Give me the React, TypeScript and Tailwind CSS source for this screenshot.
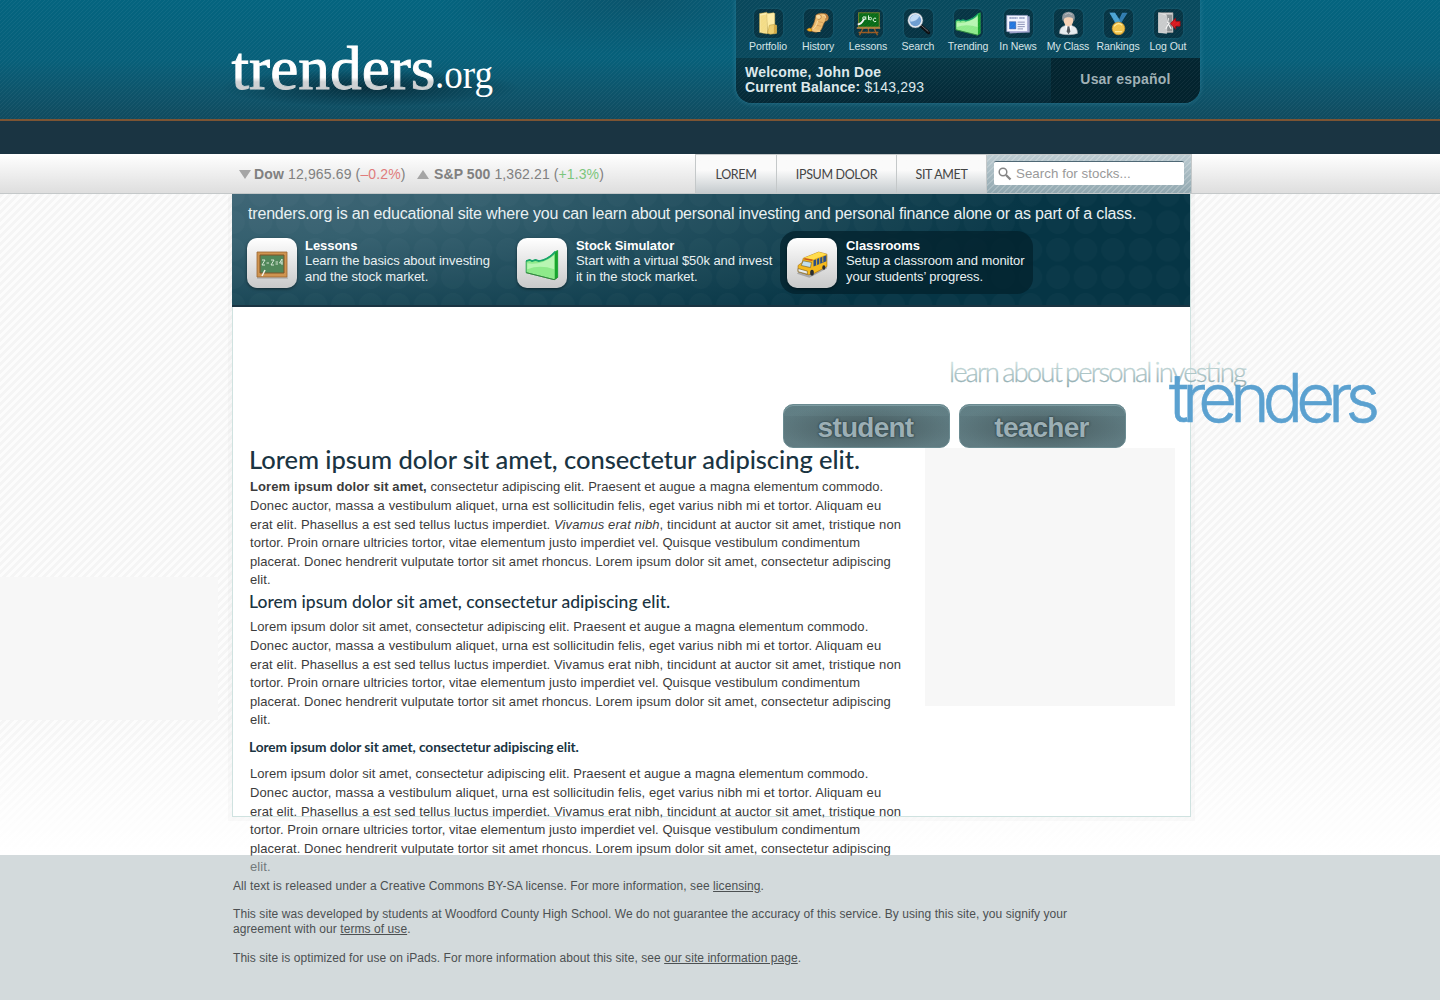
import type { ReactNode } from "react";

function Folder() {
  return (
    <svg viewBox="0 0 30 30" className="size-full">
      <path d="M5 4l8-1.500 1 1v22l-1 1-8-1.500z" fill="#fbeeb0" stroke="#b89b3e" strokeWidth=".6" />
      <path d="M6 24l7 2V5L6 6z" fill="#f3dc87" />
      <path d="M13 4l8-1 1 1v14l-8 8z" fill="#fdeca6" stroke="#c9ab4c" strokeWidth=".5" />
      <path d="M16 17l5-1 3 1v9l-7 1-3-1z" fill="#edce6e" stroke="#b89b3e" strokeWidth=".6" />
      <path d="M21 16v10l3-1v-8z" fill="#d2a945" />
    </svg>
  );
}
function Scroll() {
  return (
    <svg viewBox="0 0 30 30" className="size-full">
      <path d="M12 6c3-3 8-3 12-1 4 3 1 8-1 7-3 3-3 7-5 10-4 4-9 3-13 0 4-3 6-10 7-16z" fill="#edbb6d" stroke="#8c5725" strokeWidth=".7" />
      <path d="M12 6c3-2 6-1 6 2 0 2-3 3-4 2" fill="#f9dba1" stroke="#a56a2e" strokeWidth=".7" />
      <path d="M22 4c3 0 5 3 3 6l-3 2c1-3 2-5 0-8z" fill="#b5793c" />
      <path d="M14 12c-1 4-2 7-5 9M19 7c2-2 4-1 4 2" fill="none" stroke="#fbe0ac" strokeWidth="1" />
      <path d="M15 13l5 1M13 17l5 1" stroke="#c48f50" strokeWidth=".7" />
      <path d="M2 22c2-3 5-2 6 0s-4 3-6 0" fill="#f4b318" stroke="#805020" strokeWidth=".7" />
      <path d="M8 22c3 0 6 2 9 1" fill="none" stroke="#f0c47c" strokeWidth="2.500" />
    </svg>
  );
}
function Board() {
  return (
    <svg viewBox="0 0 30 30" className="size-full">
      <path d="M9 20L5 28M21 20l4 8M15 20v6M4 25h22" stroke="#9a5a22" strokeWidth="1.500" />
      <path d="M4 3h23v16H4z" fill="#086c17" stroke="#6f7a2b" strokeWidth="1.200" />
      <path d="M2 20h26" stroke="#c28742" strokeWidth="1.700" />
      <g fill="none" stroke="#dff6df" strokeWidth="1.100">
        <circle cx="10" cy="9" r="1.500" /><path d="M12 7v4M15 6v5" /><circle cx="17" cy="9.500" r="1.400" /><path d="M23.500 9.500a2 2 0 1 0 0 3" />
        <path d="M3 16q4 0 7-6" strokeWidth="2" stroke="#f4f4f4" />
      </g>
    </svg>
  );
}
function Lens() {
  return (
    <svg viewBox="0 0 30 30" className="size-full">
      <path d="M17 17l9 8" stroke="#0c0e11" strokeWidth="3.800" strokeLinecap="round" />
      <path d="M18 17l8 7" stroke="#7c838b" strokeWidth=".9" />
      <circle cx="11.500" cy="11.500" r="7.500" fill="#6d9dd0" stroke="#e4eaf0" strokeWidth="2" />
      <circle cx="11.500" cy="11.500" r="8.500" fill="none" stroke="#586975" strokeWidth=".5" />
      <path d="M6 13a6 6 0 0 1 10-6c-2 4-5 6-10 6z" fill="#c2dcf6" />
    </svg>
  );
}
function Chart() {
  return (
    <svg viewBox="0 0 30 30" className="size-full">
      <path d="M1 12l3-1 2 1 3-1 3 1q7-1 14-8l2-1v23l-3 2L1 22z" fill="#8eea8b" stroke="#159744" strokeWidth=".7" />
      <path d="M25.500 4.500L28 3v23l-2.500 2z" fill="#18a52d" />
      <path d="M2 14q12 2 23-7v12Q13 15 2 19z" fill="#c6fac0" opacity=".75" />
      <path d="M1 12l3-1 2 1 3-1 3 1q8-1 14-8" fill="none" stroke="#17a56a" strokeWidth="1.500" />
      <path d="M1 22l24 6 3-2" fill="none" stroke="#397b38" strokeWidth=".7" />
    </svg>
  );
}
function News() {
  return (
    <svg viewBox="0 0 30 30" className="size-full">
      <path d="M25 7h2.500v18L5 26v-2" fill="#9a9fc8" />
      <path d="M2 6h23v18H2z" fill="#f3f5ff" stroke="#9fa5cb" strokeWidth=".8" />
      <path d="M5 9h9m2 0h6" stroke="#7480b0" strokeWidth="1.700" strokeDasharray="1.500 .6" />
      <path d="M5 13h7v8H5z" fill="#2477df" stroke="#344f91" strokeWidth=".5" />
      <path d="M14 13.500h8M14 16h8M14 18.500h8M14 21h6" stroke="#8188af" />
    </svg>
  );
}
function Person() {
  return (
    <svg viewBox="0 0 30 30" className="size-full">
      <path d="M5 26c0-6 3-9 10-9s10 3 10 9c-5 2-15 2-20 0z" fill="#e8ecef" stroke="#9a9fa4" strokeWidth=".6" />
      <path d="M11 17h8l-4 9z" fill="#fff" /><path d="M14 18h2l1 6-2 3-2-3z" fill="#50575d" />
      <ellipse cx="15" cy="11.500" rx="5.500" ry="6.500" fill="#f6d2b5" />
      <path d="M9 13C6 6 10 2 15 2s9 4 6 11c0-4-2-5-6-5s-5 1-6 5z" fill="#8d959b" />
      <path d="M11 5q4-3 8 0" fill="none" stroke="#b9c1c6" />
    </svg>
  );
}
function Medal() {
  return (
    <svg viewBox="0 0 30 30" className="size-full">
      <path d="M5 3h6l5 7 3-7h6l-8 13h-5z" fill="#2f7cb0" />
      <path d="M5 3h6l6 10-4 3z" fill="#4ba4d3" />
      <circle cx="15" cy="20.500" r="7" fill="#f2c34a" stroke="#ce9328" strokeWidth=".8" />
      <path d="M10 18q5-5 9-1M11 24h8" fill="none" stroke="#ffea99" strokeWidth="1.400" />
    </svg>
  );
}
function Exit() {
  return (
    <svg viewBox="0 0 30 30" className="size-full">
      <path d="M4 3h16v22H4z" fill="#dedede" stroke="#8a8a8a" strokeWidth=".8" />
      <path d="M12 5h7v19h-7z" fill="#8b9092" />
      <path d="M4 3l9 3v20l-9-1z" fill="#c9cbcc" stroke="#eee" strokeWidth=".5" />
      <path d="M15 9l-1 5 3 1M15 15l-3 6M15 16l3 5" fill="none" stroke="#f5f5f5" strokeWidth="1.200" />
      <path d="M17 15l6-6v3.500h5v5.500h-5v3.500z" fill="#d71920" stroke="#8d080c" strokeWidth=".7" />
    </svg>
  );
}
function Slate() {
  return (
    <svg viewBox="0 0 34 30" className="mt-[2px] w-[34px]">
      <path d="M2 29h31" stroke="#000" strokeOpacity=".25" />
      <path d="M2 3h30v25H2z" fill="#cf9450" stroke="#9a6430" strokeWidth=".8" />
      <path d="M5 6h24v18H5z" fill="#50875a" stroke="#7d5529" />
      <path d="M7 11h3l-3 5h3M11.500 14h2.500M16 11h3l-3 5h3M20.500 13h2.500M20.500 15h2.500M27 10l-2.500 4h3M27 10v6" fill="none" stroke="#e2efe0" strokeWidth=".9" />
      <path d="M10 21l-3 6" stroke="#f5f2e8" strokeWidth="1.500" />
    </svg>
  );
}
function Bus() {
  return (
    <svg viewBox="0 0 34 30" className="mt-[3px] w-[35px]">
      <path d="M2 24l12 4 17-9v-2L6 19z" fill="#777" opacity=".5" />
      <path d="M8 9l15-6 8 2v12l-13 7-5 1-10-3v-6l4-3z" fill="#f4b91c" stroke="#a46c0a" strokeWidth=".6" />
      <path d="M8 9l15-6 8 2-13 5z" fill="#ffdc4c" />
      <path d="M18 11l12.500-5v6L18 17z" fill="#2c4f86" />
      <path d="M21 9v7M24 8v7M27 7v6" stroke="#f4b91c" strokeWidth=".9" />
      <path d="M8 11.500l8 1.500-1 5-9-2z" fill="#c2dfee" stroke="#6d5b2c" strokeWidth=".6" />
      <path d="M9 9.500l8 1.500" stroke="#c8561c" strokeWidth="1.500" />
      <path d="M3 19l9 2.500v3L3 22z" fill="#e7edf0" stroke="#785b1a" strokeWidth=".6" />
      <ellipse cx="16.500" cy="23" rx="1.800" ry="2.800" fill="#292d31" /><ellipse cx="28" cy="18" rx="1.500" ry="2.200" fill="#292d31" />
    </svg>
  );
}

const tools: { label: string; icon: ReactNode }[] = [
  { label: "Portfolio", icon: <Folder /> },
  { label: "History", icon: <Scroll /> },
  { label: "Lessons", icon: <Board /> },
  { label: "Search", icon: <Lens /> },
  { label: "Trending", icon: <Chart /> },
  { label: "In News", icon: <News /> },
  { label: "My Class", icon: <Person /> },
  { label: "Rankings", icon: <Medal /> },
  { label: "Log Out", icon: <Exit /> },
];

const features = [
  { title: "Lessons", a: "Learn the basics about investing", b: "and the stock market.", icon: <Slate />, box: "w-[270px]", text: "ml-[8px]" },
  { title: "Stock Simulator", a: "Start with a virtual $50k and invest", b: "it in the stock market.", icon: <div className="mt-[2px] w-[35px]"><Chart /></div>, box: "w-[270px]", text: "ml-[9px]" },
  { title: "Classrooms", a: "Setup a classroom and monitor", b: "your students’ progress.", icon: <Bus />, box: "w-[253px] rounded-[16px] bg-[#03222c]/75", text: "ml-[9px]" },
];

const tabs = [
  { label: "LOREM", w: "w-[81px]" },
  { label: "IPSUM DOLOR", w: "w-[120px]" },
  { label: "SIT AMET", w: "w-[90px]" },
];

function Copy({ rich = false }: { rich?: boolean }) {
  return (
    <p className="grid grid-rows-[19px_19px_18px_19px_18px_19px] text-[13px] leading-[17px] whitespace-nowrap text-[#3c3c3c]">
      <span className="tracking-[0.055px]">{rich ? <b className="tracking-[0.1px]">Lorem ipsum dolor sit amet,</b> : "Lorem ipsum dolor sit amet,"} consectetur adipiscing elit. Praesent et augue a magna elementum commodo.</span>
      <span className="tracking-[0.094px]">Donec auctor, massa a vestibulum aliquet, urna est sollicitudin felis, eget varius nibh mi et tortor. Aliquam eu</span>
      <span className="tracking-[0.1px]">erat elit. Phasellus a est sed tellus luctus imperdiet. {rich ? <i>Vivamus erat nibh</i> : "Vivamus erat nibh"}, tincidunt at auctor sit amet, tristique non</span>
      <span className="tracking-[0.065px]">tortor. Proin ornare ultricies tortor, vitae elementum justo imperdiet vel. Quisque vestibulum condimentum</span>
      <span className="tracking-[0.05px]">placerat. Donec hendrerit vulputate tortor sit amet rhoncus. Lorem ipsum dolor sit amet, consectetur adipiscing</span>
      <span className="tracking-[0.1px]">elit.</span>
    </p>
  );
}

const LINE = "Lorem ipsum dolor sit amet, consectetur adipiscing elit.";

export default function App() {
  return (
    <div className="relative h-[1000px] w-[1440px] overflow-hidden bg-white font-['Liberation_Sans',sans-serif]">
      <header className="relative h-[121px] border-b-2 border-[#7c5433] bg-linear-to-b from-[#04647f] via-[#07607a] to-[#104b5f]">
        <div className="absolute inset-0 bg-[radial-gradient(ellipse_200px_55px_at_640px_0px,rgba(20,60,80,0.4),transparent)]" />
        <div className="relative ml-[232px] flex w-[968px] items-start justify-between">
          <svg className="mt-[36px] -ml-3 overflow-visible" width="300" height="76" viewBox="220 36 300 76">
            <defs>
              <linearGradient id="logo" gradientUnits="userSpaceOnUse" x1="0" y1="46" x2="0" y2="92">
                <stop offset="0.68" stopColor="#fff" /><stop offset="0.78" stopColor="#d0d2d4" /><stop offset="1" stopColor="#c9ccce" />
              </linearGradient>
              <radialGradient id="shade"><stop offset="0" stopColor="#04202c" stopOpacity=".75" /><stop offset="1" stopColor="#04202c" stopOpacity="0" /></radialGradient>
            </defs>
            <ellipse cx="370" cy="88" rx="150" ry="19" fill="url(#shade)" />
            <text x="231.500" y="88.500" fontFamily="'Liberation Serif', serif" fontSize="60.500" fill="url(#logo)" stroke="url(#logo)" strokeWidth=".9" textLength="204" lengthAdjust="spacingAndGlyphs">trenders</text>
            <text x="435" y="87.500" fontFamily="'Liberation Serif', serif" fontSize="39" fill="#fff" textLength="58" lengthAdjust="spacingAndGlyphs">.org</text>
          </svg>
          <div className="h-[103px] w-[464px] overflow-hidden rounded-b-[16px] bg-[#0a4356]/80 shadow-[0_0_4px_1px_rgba(50,130,155,0.5)]">
            <nav className="flex h-[58px] pt-[9px] pl-[7px]">
              {tools.map((t) => (
                <div key={t.label} className="flex w-[50px] flex-col items-center">
                  <div className="size-[29px] rounded-[6px] bg-[#06303d]/80 p-px shadow-[0_0_2px_1px_rgba(40,110,130,0.3)]">{t.icon}</div>
                  <span className="mt-[2px] text-[10.5px] leading-[13px] tracking-[-0.08px] whitespace-nowrap text-[#d6e4e8]">{t.label}</span>
                </div>
              ))}
            </nav>
            <div className="flex h-[45px] bg-linear-to-b from-[#073846] to-[#042836]">
              <div className="w-[315px] pt-[7px] pl-[9px] text-[14px] leading-[15px] text-[#dde8eb]">
                <b className="tracking-[0.2px]">Welcome, John Doe</b>
                <br />
                <span className="tracking-[0.16px]"><b>Current Balance:</b> $143,293</span>
              </div>
              <div className="flex-1 bg-[#03222c]/80 pt-[13px] text-center text-[14px] leading-[17px] font-bold tracking-[0.2px] text-[#9fb0b5]">Usar español</div>
            </div>
          </div>
        </div>
        <div className="pointer-events-none absolute inset-0 bg-[linear-gradient(135deg,rgba(255,255,255,0.05)_12.5%,transparent_12.5%,transparent_50%,rgba(255,255,255,0.05)_50%,rgba(255,255,255,0.05)_62.5%,transparent_62.5%)] bg-[length:4px_4px]" />
      </header>
      <div className="h-[33px] bg-[#1a3442]" />
      <div className="relative z-10 h-[40px] border-b border-[#c4c8c9] bg-linear-to-b from-white to-[#dedede]">
        <div className="ml-[232px] flex h-[40px] w-[960px] justify-between">
          <div className="flex items-center pl-[7px] text-[14px] text-[#808080]">
            <span className="h-0 w-0 border-x-[6px] border-t-[9px] border-x-transparent border-t-[#a5a5a5]" />
            <span className="ml-[3px] w-[152px] tracking-[0.14px] whitespace-nowrap"><b>Dow</b> 12,965.69 (<span className="text-[#e07c7c]">–0.2%</span>)</span>
            <span className="ml-[11px] h-0 w-0 border-x-[6px] border-b-[9px] border-x-transparent border-b-[#a5a5a5]" />
            <span className="ml-[5px] tracking-[0.1px] whitespace-nowrap"><b>S&amp;P 500</b> 1,362.21 (<span className="text-[#7cc67c]">+1.3%</span>)</span>
          </div>
          <div className="flex border border-[#c4c8c9] font-['Lato'] text-[12.5px] text-[#444]">
            {tabs.map((t) => (
              <div key={t.label} className={`${t.w} flex items-center justify-center border-r border-[#c4c8c9] bg-linear-to-b from-[#fafafa] from-40% to-[#c5cbce] pt-[3px] tracking-[-0.35px]`}>{t.label}</div>
            ))}
            <div className="w-[204px] bg-[linear-gradient(135deg,rgba(255,255,255,0.18)_12.5%,transparent_12.5%,transparent_50%,rgba(255,255,255,0.18)_50%,rgba(255,255,255,0.18)_62.5%,transparent_62.5%),linear-gradient(#bccbd1,#92a8b0)] bg-[length:6px_6px,100%_100%] pt-[6px] pl-[7px]">
              <div className="flex h-[24px] w-[190px] items-center rounded-[2px] border-t border-[#4f6875] bg-white pl-[4px] font-['Liberation_Sans'] text-[#999]">
                <svg width="14" height="14" viewBox="0 0 14 14" fill="none" stroke="#858585"><circle cx="5" cy="5" r="3.800" strokeWidth="1.500" /><path d="M8 8l4.500 4.500" strokeWidth="2.300" /></svg>
                <span className="ml-[4px] text-[13.3px] tracking-[0.05px]">Search for stocks...</span>
              </div>
            </div>
          </div>
        </div>
      </div>

      <div className="h-[661px] bg-[linear-gradient(to_bottom,transparent_520px,white_660px),linear-gradient(135deg,#f5f5f5_25%,#fcfcfc_25%,#fcfcfc_50%,#f5f5f5_50%,#f5f5f5_75%,#fcfcfc_75%)] bg-[length:100%_100%,8px_8px]">
        <aside className="absolute top-[577px] left-0 h-[143px] w-[218px] bg-[#f7f7f7]" />
        <main className="relative ml-[232px] h-[623px] w-[959px] border border-t-0 border-[#cfe2e0] bg-white shadow-[0_0_0_4px_rgba(0,0,0,0.02)]">
          <section className="-ml-px h-[113px] w-[958px] border-b-2 border-[#1a3442] bg-[radial-gradient(circle_at_50%_50%,rgba(255,255,255,0.02)_11.500px,transparent_12px),radial-gradient(ellipse_950px_190px_at_0_0,#3f6676_0%,#35606f_25%,#063545_85%)] bg-[length:27.500px_27.500px,100%_100%] bg-[position:-12.750px_14.500px,0_0] pt-[10px] text-[#e9f0f2]">
            <p className="ml-[16px] w-fit text-[16px] leading-[20px] tracking-[-0.181px] whitespace-nowrap">trenders.org is an educational site where you can learn about personal investing and personal finance alone or as part of a class.</p>
            <div className="mt-[7px] flex pl-[8px]">
              {features.map((f) => (
                <div key={f.title} className={`${f.box} flex h-[63px] pt-[7px] pl-[7px]`}>
                  <div className="flex size-[50px] shrink-0 items-center justify-center rounded-[10px] bg-linear-to-b from-white to-[#c9c9c9] shadow-[0_1px_3px_rgba(0,0,0,0.5)]">{f.icon}</div>
                  <div className={`${f.text} grid grid-rows-[15px_16px_16px] text-[13px] leading-[15px] tracking-[-0.05px] whitespace-nowrap`}>
                    <b className="text-white">{f.title}</b><span>{f.a}</span><span>{f.b}</span>
                  </div>
                </div>
              ))}
            </div>
          </section>
          <div className="flex h-[141px] items-end gap-[9px] pl-[550px]">
            {["student", "teacher"].map((b) => (
              <button key={b} className="flex h-[44px] w-[167px] items-center justify-center rounded-[10px] border border-[#6b8b91] bg-[linear-gradient(rgba(130,165,170,0.12),rgba(130,165,170,0.12)),radial-gradient(ellipse_at_50%_55%,#4a5f63_10%,transparent_75%),linear-gradient(#5c797f,#607b81)] bg-[length:100%_11px,100%_100%,100%_100%] bg-no-repeat pt-[4px] pr-[2px] text-[28px] leading-none font-bold tracking-[-0.75px] text-[#9cafb5] shadow-[inset_0_1px_0_#7f9da3] [text-shadow:0_0_2px_#2e4247,0_0_2px_#2e4247]">{b}</button>
            ))}
          </div>
          <div className="flex justify-between pr-[15px] pl-[17px]">
            <article className="font-normal">
              <h1 className="-ml-px h-[30px] font-['Lato'] text-[25.5px] leading-[22px] font-medium tracking-[-0.05px] whitespace-nowrap text-[#1a3442]">{LINE}</h1>
              <Copy rich />
              <h2 className="-ml-px h-[28px] pt-px font-['Lato'] text-[17.5px] leading-[22px] font-medium whitespace-nowrap text-[#1a3442]">{LINE}</h2>
              <Copy />
              <h3 className="-ml-px h-[35px] pt-[7px] font-['Lato'] text-[13.7px] leading-[20px] font-bold tracking-[-0.06px] whitespace-nowrap text-[#1a3442]">{LINE}</h3>
              <Copy />
            </article>
            <aside className="h-[258px] w-[250px] bg-[#f7f7f7]" />
          </div>
          <svg className="absolute top-[156px] left-[707px] overflow-visible" width="450" height="90" viewBox="940 350 450 90">
            <defs><linearGradient id="tag" gradientUnits="userSpaceOnUse" x1="0" y1="360" x2="0" y2="388"><stop stopColor="#d3e6e4" /><stop offset="1" stopColor="#86a3a8" /></linearGradient></defs>
            <text x="949" y="382" fontFamily="Lato" fontWeight="300" fontSize="27.500" fill="url(#tag)" stroke="url(#tag)" strokeWidth=".3" wordSpacing="-1.500" textLength="298">learn about personal investing</text>
            <text x="1169" y="422" fontFamily="Inter, sans-serif" fontWeight="300" fontSize="67" fill="#5ba1d0" stroke="#5ba1d0" strokeWidth=".6" textLength="211">trenders</text>
          </svg>
        </main>
      </div>

      <footer className="relative h-[145px] bg-[#a7b5b9]/50 pt-[24px] pl-[233px] text-[12px] leading-[15px] whitespace-nowrap text-[#4c5052]">
        <p className="tracking-[0.08px]">All text is released under a Creative Commons BY-SA license. For more information, see <a className="underline">licensing</a>.</p>
        <p className="mt-[13px] tracking-[0.066px]">This site was developed by students at Woodford County High School. We do not guarantee the accuracy of this service. By using this site, you signify your<br />agreement with our <a className="underline">terms of use</a>.</p>
        <p className="mt-[14px] tracking-[0.06px]">This site is optimized for use on iPads. For more information about this site, see <a className="underline">our site information page</a>.</p>
      </footer>
    </div>
  );
}
